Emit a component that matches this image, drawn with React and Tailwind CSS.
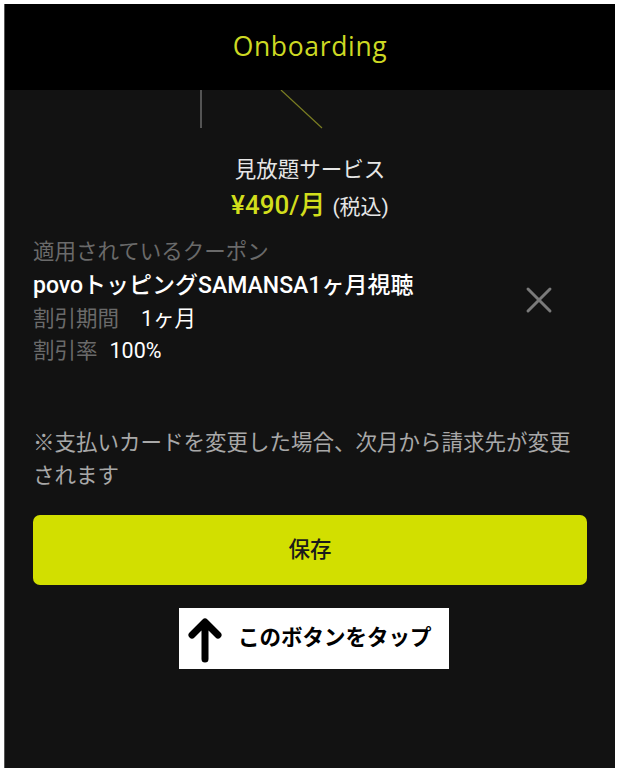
import React from 'react';
import { X } from 'lucide-react';

export default function App() {
  return (
    <div className="w-[620px] h-[773px] bg-white p-[4px_5px_5px_4px]" style={{ fontFamily: 'Roboto, "Noto Sans CJK JP", sans-serif' }}>
      <div className="h-full bg-[#121212] border-l border-[#555] flex flex-col">
        {/* header */}
        <header className="h-[86px] bg-black flex items-center justify-center shrink-0">
          <h1 className="text-[26.5px] text-[#cdd923] tracking-wide" style={{ fontFamily: '"Open Sans", "Noto Sans", sans-serif' }}>Onboarding</h1>
        </header>

        {/* leftover strokes of the illustration under the header */}
        <div className="h-[40px] relative shrink-0">
          <svg className="absolute left-0 top-0" width="612" height="40">
            <line x1="196" y1="0" x2="196" y2="38" stroke="#6b6b6b" strokeWidth="1.5" />
            <line x1="276" y1="0" x2="317" y2="38" stroke="#7a7d22" strokeWidth="1.2" />
          </svg>
        </div>

        <div className="flex flex-col items-center mt-[25px]">
          <p className="text-[21.5px] leading-[30px] text-[#e6e6e6]">見放題サービス</p>
          <p className="mt-[3px] h-[34px] leading-[34px]">
            <span className="text-[26px] font-medium text-[#d2de1c]">¥490/月</span>
            <span className="text-[21px] text-[#e6e6e6] ml-[7px]">(税込)</span>
          </p>
        </div>

        <div className="px-[28px] mt-[14px] flex items-center">
          <div className="flex-1">
            <p className="text-[21.5px] leading-[32px] text-[#6a6a6a]">適用されているクーポン</p>
            <p className="text-[23px] leading-[36px] font-medium text-white">povoトッピングSAMANSA1ヶ月視聴</p>
            <p className="text-[21.5px] leading-[30px]">
              <span className="text-[#6a6a6a]">割引期間</span>
              <span className="text-white ml-[22px]">1ヶ月</span>
            </p>
            <p className="text-[21.5px] leading-[34px]">
              <span className="text-[#6a6a6a]">割引率</span>
              <span className="text-white ml-[12px]">100%</span>
            </p>
          </div>
          <X size={44} strokeWidth={1.6} className="text-[#7a7a7a] mr-[26px] mb-[4px]" />
        </div>

        <p className="px-[28px] mt-[58px] text-[21.5px] leading-[33px] text-[#a8a8a8]">
          ※支払いカードを変更した場合、次月から請求先が変更されます
        </p>

        <button className="mx-[28px] mt-[23px] h-[70px] rounded-[7px] bg-[#d2df00] text-[21.5px] text-[#1a1a1a] font-medium">
          保存
        </button>

        <div className="flex justify-center mt-[23px]">
          <div className="w-[270px] h-[61px] ml-[8px] bg-white flex items-center pl-[9px] gap-[16px]">
            <svg width="34" height="48" viewBox="0 0 34 48">
              <path d="M17 44 V8 M4 20 L17 7 L30 20" fill="none" stroke="#000" strokeWidth="7" strokeLinecap="round" strokeLinejoin="round" />
            </svg>
            <span className="text-[21.5px] font-bold text-black">このボタンをタップ</span>
          </div>
        </div>
      </div>
    </div>
  );
}
